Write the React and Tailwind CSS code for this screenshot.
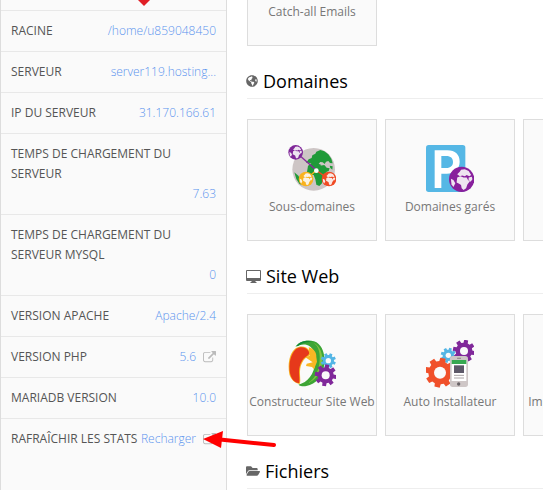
import { FaFolderOpen, FaGlobeAmericas } from "react-icons/fa";

function gearPath(cx, cy, outer, inner, teeth, turn) {
  const step = (Math.PI * 2) / teeth;
  const points = [];
  for (let i = 0; i < teeth; i += 1) {
    const a = i * step + turn;
    [
      [inner, -0.33],
      [outer, -0.23],
      [outer, 0.23],
      [inner, 0.33],
    ].forEach(([r, t]) => {
      points.push(`${(cx + r * Math.cos(a + t * step)).toFixed(1)} ${(cy + r * Math.sin(a + t * step)).toFixed(1)}`);
    });
  }
  return `M${points.join("L")}Z`;
}

function Gear({ cx, cy, outer, inner, hole, color, teeth = 8, turn = 0 }) {
  return (
    <g>
      <path d={gearPath(cx, cy, outer, inner, teeth, turn)} fill={color} />
      <circle cx={cx} cy={cy} r={hole} fill="#fafafa" />
    </g>
  );
}

function MiniGlobe({ cx, cy, r, color }) {
  return (
    <g transform={`translate(${cx} ${cy}) scale(${r / 20})`}>
      <circle r="20" fill={color} />
      <g fill="#fafafa" fillOpacity="0.9">
        <path d="M-7-8l4-4 2-3 6-1 6 3 4 6-3 2-4-2-3 2-4-1-4 1z" />
        <path d="M-7-3l5-2 5 2 5 0 2 4 3 2-4 5-2 6-4 3-3-3-1-5-3-2-4-2z" />
        <path d="M11-3l5-1 1 4-3 4-3-3z" />
        <path d="M-17-1l4 2 3 5-3 6-3-4z" />
      </g>
    </g>
  );
}

function SubdomainsIcon() {
  return (
    <svg viewBox="24 30 144 144" className="size-12" aria-hidden="true">
      <circle cx="101" cy="103" r="64" fill="#cdc5c5" />
      <g fill="#1f9a38">
        <path d="M86 73l9-4 2-8 9-5 3-6 12-5 12 4 12 9 9 13 4 14-8-1-5-6-7 2-4 7-6-5-7-1-5 5 8 4-4 4-13-5-9 2-4-5-8-3-8 1z" />
        <path d="M84 92l12-7 12 2 12 5 13-2 7 8 9 2-3 8-7 3-6 12-5 8-2 14-8 8-9-4-3-16-5-13-12-1-8-8z" />
        <path d="M43 112l12 10 8 14 3 15-8-5-9-14z" />
        <path d="M149 92l9 2-1 10-6-5z" />
      </g>
      <path d="M48 52l61 54" stroke="#87299b" strokeWidth="4" />
      <path d="M109 106l-30 26" stroke="#f9b21d" strokeWidth="4" />
      <path d="M109 106l36 26" stroke="#f04a23" strokeWidth="4" />
      <circle cx="109" cy="107" r="7" fill="#fff" />
      <MiniGlobe cx={47} cy={52} r={22} color="#7f2698" />
      <MiniGlobe cx={78} cy={132} r={22} color="#f9b21d" />
      <MiniGlobe cx={147} cy={132} r={22} color="#f04a23" />
    </svg>
  );
}

function ParkedIcon() {
  return (
    <svg viewBox="33 30 144 144" className="size-12" aria-hidden="true">
      <rect x="33" y="30" width="118" height="141" rx="8" fill="#55b7e5" />
      <path
        d="M59 46h38c24 0 37 13 37 34s-15 36-39 36H79v43H59zM79 63v36h15c13 0 20-7 20-18s-7-18-20-18z"
        fill="#fff"
        fillRule="evenodd"
      />
      <MiniGlobe cx={140} cy={133} r={38} color="#88209d" />
    </svg>
  );
}

function BuilderIcon() {
  return (
    <svg viewBox="24 30 144 144" className="size-12" aria-hidden="true">
      <path d="M46 51C58 33 83 27 102 34c24 8 34 36 31 68-3 36-25 61-54 66-10 2-18 0-24-4 28-6 48-32 51-68 2-25-7-46-25-51-12-3-24 0-35 6z" fill="#3da535" />
      <path d="M49 47c13-15 32-17 48-11-18-1-33 3-44 13z" fill="#138a37" />
      <path d="M100 38c17 10 22 34 18 63-4 27-16 47-34 58 22-8 38-30 42-58 4-29-5-54-26-63z" fill="#83c341" />
      <path d="M86 52c14 4 24 14 23 29l2 14-9 23-6-7-18-3 2-7 18-4-22-15 13-5z" fill="#f9b724" />
      <path d="M28 133C22 101 29 68 47 55c14-9 33-7 42 8 4 7 1 13-4 16-15 8-24 24-25 45-1 13 3 29-1 38-14-2-26-12-31-29z" fill="#f8b51f" />
      <path d="M30 130C25 101 32 71 48 57c13-9 30-7 38 7 3 6 1 10-4 13-15 8-24 26-25 47 0 13 3 27 0 36-14-2-23-13-27-30z" fill="#e6391b" />
      <Gear cx={145} cy={92} outer={23} inner={17} hole={8} color="#53b5e5" turn={0.39} />
      <Gear cx={137} cy={136} outer={33} inner={24} hole={12} color="#80289a" turn={0.15} />
    </svg>
  );
}

function InstallerIcon() {
  return (
    <svg viewBox="33 30 144 144" className="size-12" aria-hidden="true">
      <Gear cx={147} cy={63} outer={34} inner={25} hole={12} color="#80289a" turn={0.2} />
      <Gear cx={100} cy={76} outer={23} inner={17} hole={8} color="#53b5e5" turn={0.3} />
      <Gear cx={75} cy={128} outer={45} inner={35} hole={18} color="#f0502a" turn={0.2} />
      <rect x="105" y="78" width="54" height="93" rx="8" fill="#cec6c6" />
      <rect x="126" y="83" width="12" height="3" rx="1" fill="#857d7d" />
      <rect x="110" y="90" width="44" height="63" fill="#fff" />
      <rect x="110" y="90" width="44" height="12" fill="#36a951" />
      <rect x="117" y="106" width="30" height="23" fill="#5d5969" />
      <path d="M117 136h30M117 144h30" stroke="#aaa4a6" strokeWidth="3" />
      <circle cx="131" cy="162" r="5" fill="#686367" />
    </svg>
  );
}

function MonitorIcon() {
  return (
    <svg viewBox="0 0 15 13" className="h-[13px] w-[15px]" fill="#666" aria-hidden="true">
      <path d="M1 0h13a1 1 0 0 1 1 1v9a1 1 0 0 1-1 1H9.500v1h1v1h-6v-1h1v-1H1a1 1 0 0 1-1-1V1a1 1 0 0 1 1-1zM1 1v7h13V1z" fillRule="evenodd" />
    </svg>
  );
}

function ExternalIcon() {
  return (
    <svg viewBox="0 0 1792 1792" className="size-[13px] shrink-0" fill="#bbb" aria-hidden="true">
      <path d="M1408 928v320q0 119-84.5 203.500t-203.500 84.500h-832q-119 0-203.500-84.500t-84.500-203.500v-832q0-119 84.500-203.500t203.500-84.500h704q14 0 23 9t9 23v64q0 14-9 23t-23 9h-704q-66 0-113 47t-47 113v832q0 66 47 113t113 47h832q66 0 113-47t47-113v-320q0-14 9-23t23-9h64q14 0 23 9t9 23zm384-864v512q0 26-19 45t-45 19-45-19l-176-176-652 652q-10 10-23 10t-23-10l-114-114q-10-10-10-23t10-23l652-652-176-176q-19-19-19-45t19-45 45-19h512q26 0 45 19t19 45z" />
    </svg>
  );
}

const stats = [
  { label: "RACINE", value: "/home/u859048450" },
  { label: "SERVEUR", value: "server119.hosting..." },
  { label: "IP DU SERVEUR", value: "31.170.166.61" },
  { label: "TEMPS DE CHARGEMENT DU SERVEUR", value: "7.63", tall: true },
  { label: "TEMPS DE CHARGEMENT DU SERVEUR MYSQL", value: "0", tall: true },
  { label: "VERSION APACHE", value: "Apache/2.4" },
  { label: "VERSION PHP", value: "5.6", link: true },
  { label: "MARIADB VERSION", value: "10.0" },
  { label: "RAFRAÎCHIR LES STATS", value: "Recharger", link: true, arrow: true },
];

function PointerArrow() {
  return (
    <svg viewBox="0 0 74 18" className="pointer-events-none absolute top-3 left-[202px] z-10 h-[18px] w-[74px]" aria-hidden="true">
      <path d="M17 8.500L71 14" stroke="#f00" strokeWidth="4" strokeLinecap="round" />
      <path d="M0 8L20 0L18 17Z" fill="#f00" />
    </svg>
  );
}

function StatRow({ label, value, tall, link, arrow }) {
  return (
    <div className={`relative border-t border-[#e8e8e8] px-2.5 py-2.5 ${tall ? "" : "flex justify-between"}`}>
      <dt className="text-[#555]">{label}</dt>
      <dd className="flex items-center justify-end font-light whitespace-nowrap text-[#5b94ee]">
        {link ? (
          <a href="#stats" className="flex items-center gap-[7px]">
            {value}
            <ExternalIcon />
          </a>
        ) : (
          value
        )}
      </dd>
      {arrow && <PointerArrow />}
    </div>
  );
}

function Tile({ icon, label }) {
  return (
    <a href="#tool" className="flex h-[122px] w-[130px] shrink-0 flex-col items-center gap-1 border border-[#ddd] bg-[#fafafa] pt-[25px] text-xs leading-5 whitespace-nowrap text-[#777]">
      {icon || <span className="size-12" />}
      {label}
    </a>
  );
}

function Section({ icon, title, tiles }) {
  return (
    <section className="pt-[26px]">
      <h2 className="-ml-px flex h-[18px] items-center gap-[5px] text-lg leading-[18px] text-black">
        {icon}
        {title}
      </h2>
      <div className="border-b border-[#eee] pt-2" />
      <div className="flex gap-2 pt-5">
        {tiles.map((tile, index) => (
          <Tile key={index} {...tile} />
        ))}
      </div>
    </section>
  );
}

export default function App() {
  return (
    <div className="flex h-screen overflow-hidden bg-white font-['Open_Sans','Noto_Sans',sans-serif]">
      <aside className="w-[227px] shrink-0 border-x border-[#ddd] bg-[#fafafa] text-xs leading-5">
        <div className="flex h-2.5 justify-center pl-[60px]">
          <svg viewBox="0 0 12 6" className="h-1.5 w-3" aria-hidden="true">
            <path d="M0 0H12L6 6Z" fill="#e01f26" />
          </svg>
        </div>
        <dl>
          {stats.map((stat) => (
            <StatRow key={stat.label} {...stat} />
          ))}
        </dl>
      </aside>
      <main className="min-w-0 flex-1 overflow-hidden pl-5">
        <div className="flex h-[46px] items-end">
          <Tile label="Catch-all Emails" />
        </div>
        <Section
          icon={<FaGlobeAmericas className="size-3 text-[#666]" />}
          title="Domaines"
          tiles={[
            { label: "Sous-domaines", icon: <SubdomainsIcon /> },
            { label: "Domaines garés", icon: <ParkedIcon /> },
            {},
          ]}
        />
        <Section
          icon={<MonitorIcon />}
          title="Site Web"
          tiles={[
            { label: "Constructeur Site Web", icon: <BuilderIcon /> },
            { label: "Auto Installateur", icon: <InstallerIcon /> },
            { label: "Importer un Site Web" },
          ]}
        />
        <Section icon={<FaFolderOpen className="size-3.5 text-[#666]" />} title="Fichiers" tiles={[]} />
      </main>
    </div>
  );
}
